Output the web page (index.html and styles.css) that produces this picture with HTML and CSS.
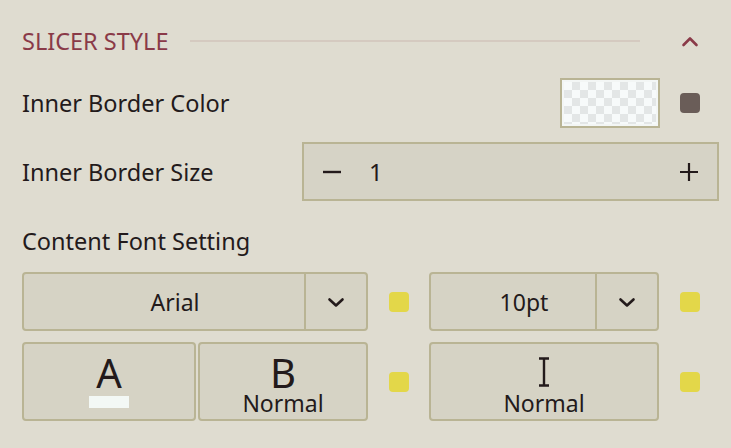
FILE: index.html
```html
<!DOCTYPE html>
<html lang="en">
<head>
  <meta charset="UTF-8">
  <meta name="viewport" content="width=device-width, initial-scale=1.0">
  <title>Slicer Style</title>
  <link rel="stylesheet" href="styles.css">
</head>
<body>
  <div class="panel">
    <div class="section-head">
      <span class="section-title">SLICER STYLE</span>
      <span class="section-rule"></span>
      <button class="collapse-btn" aria-label="Collapse">
        <svg width="18" height="12" viewBox="0 0 18 12"><path d="M2.5 10 L9 3.5 L15.5 10" fill="none" stroke="#8a3a48" stroke-width="2.6" stroke-linecap="round" stroke-linejoin="round"/></svg>
      </button>
    </div>

    <div class="row row-color">
      <span class="label">Inner Border Color</span>
      <div class="swatch"><div class="swatch-fill"></div></div>
      <span class="dot dot-dark"></span>
    </div>

    <div class="row row-size">
      <span class="label">Inner Border Size</span>
      <div class="stepper">
        <button class="step-btn" aria-label="Decrease">
          <svg width="20" height="20" viewBox="0 0 20 20"><path d="M1 10 H19" stroke="#231a1b" stroke-width="2.4"/></svg>
        </button>
        <span class="step-value">1</span>
        <button class="step-btn" aria-label="Increase">
          <svg width="20" height="20" viewBox="0 0 20 20"><path d="M1 10 H19 M10 1 V19" stroke="#231a1b" stroke-width="2.2"/></svg>
        </button>
      </div>
    </div>

    <div class="label label-block">Content Font Setting</div>

    <div class="font-grid">
      <div class="select">
        <span class="select-value">Arial</span>
        <span class="select-arrow">
          <svg width="18" height="11" viewBox="0 0 18 11"><path d="M2.5 2.5 L9 8.5 L15.5 2.5" fill="none" stroke="#231a1b" stroke-width="2.6" stroke-linecap="round" stroke-linejoin="round"/></svg>
        </span>
      </div>
      <span class="dot dot-yellow"></span>
      <div class="select">
        <span class="select-value">10pt</span>
        <span class="select-arrow">
          <svg width="18" height="11" viewBox="0 0 18 11"><path d="M2.5 2.5 L9 8.5 L15.5 2.5" fill="none" stroke="#231a1b" stroke-width="2.6" stroke-linecap="round" stroke-linejoin="round"/></svg>
        </span>
      </div>
      <span class="dot dot-yellow"></span>

      <div class="style-pair">
        <button class="style-btn">
          <span class="style-glyph">A</span>
          <span class="color-bar"></span>
        </button>
        <button class="style-btn">
          <span class="style-glyph">B</span>
          <span class="style-name">Normal</span>
        </button>
      </div>
      <span class="dot dot-yellow"></span>
      <button class="style-btn">
        <span class="style-icon">
          <svg width="14" height="30" viewBox="0 0 14 30"><path d="M2 1.5 H12 M2 28.5 H12 M7 1.5 V28.5" fill="none" stroke="#231a1b" stroke-width="2.4"/></svg>
        </span>
        <span class="style-name">Normal</span>
      </button>
      <span class="dot dot-yellow"></span>
    </div>
  </div>
</body>
</html>
```

FILE: styles.css
```css
body {
  margin: 0;
  background: #dfdcd0;
  font-family: 'Noto Sans', 'Open Sans', sans-serif;
  color: #231a1b;
}

button {
  font-family: inherit;
  color: inherit;
  padding: 0;
  cursor: pointer;
}

.panel {
  width: 697px;
  margin-left: 22px;
  padding-top: 25px;
}

.section-head {
  display: flex;
  align-items: center;
  height: 32px;
  margin-bottom: 21px;
}

.section-title {
  font-size: 23.5px;
  line-height: 32px;
  color: #8a3a48;
}

.section-rule {
  flex: 1;
  height: 2px;
  background: #d5cac0;
  margin: 0 20px 0 22px;
}

.collapse-btn {
  width: 59px;
  height: 32px;
  border: none;
  background: none;
  display: flex;
  align-items: center;
  justify-content: center;
}

.row {
  display: flex;
  align-items: center;
}

.label {
  font-size: 23.5px;
  line-height: 32px;
  flex: 1;
}

.row-color {
  height: 50px;
  margin-bottom: 14px;
}

.swatch {
  width: 100px;
  height: 50px;
  box-sizing: border-box;
  border: 2px solid #b9b494;
  background: #f3f6f5;
  padding: 2px;
}

.swatch-fill {
  height: 100%;
  background: repeating-conic-gradient(#e3e6e6 0 25%, #f7fafa 0 50%) 0 0 / 16px 16px;
}

.dot {
  width: 20px;
  height: 20px;
  border-radius: 4px;
  align-self: center;
}

.row-color .dot {
  margin: 0 19px 0 20px;
}

.dot-dark {
  background: #6a5d58;
}

.dot-yellow {
  background: #e3d749;
}

.row-size {
  height: 59px;
  margin-bottom: 24px;
}

.stepper {
  width: 417px;
  height: 59px;
  box-sizing: border-box;
  border: 2px solid #b9b494;
  background: #d6d3c6;
  display: flex;
  align-items: center;
  padding: 0 18px;
}

.step-btn {
  border: none;
  background: none;
  width: 20px;
  height: 20px;
  display: flex;
}

.step-value {
  font-size: 24px;
  margin-left: 27px;
  flex: 1;
}

.label-block {
  margin-bottom: 15px;
}

.font-grid {
  display: grid;
  grid-template-columns: 346px 20px 230px 20px;
  grid-template-rows: 59px 79px;
  column-gap: 20.5px;
  row-gap: 11px;
}

.select {
  display: flex;
  box-sizing: border-box;
  border: 2px solid #b9b494;
  border-radius: 4px;
  background: #d6d3c5;
}

.select-value {
  flex: 1;
  display: flex;
  align-items: center;
  justify-content: center;
  font-size: 23px;
  padding-left: 22px;
}

.select-arrow {
  width: 60px;
  border-left: 2px solid #b9b494;
  display: flex;
  align-items: center;
  justify-content: center;
  padding-top: 1px;
}

.style-pair {
  display: grid;
  grid-template-columns: 174px 1fr;
  column-gap: 2px;
}

.style-btn {
  box-sizing: border-box;
  border: 2px solid #b9b494;
  border-radius: 4px;
  background: #d6d3c5;
  display: flex;
  flex-direction: column;
  align-items: center;
  padding-top: 11px;
}

.style-glyph {
  font-size: 40px;
  line-height: 36px;
}

.style-icon {
  height: 36px;
  display: flex;
  align-items: center;
  padding-bottom: 2px;
  box-sizing: border-box;
}

.style-name {
  font-size: 23px;
  line-height: 24px;
}

.color-bar {
  width: 40px;
  height: 12px;
  margin-top: 5px;
  background: #f3f8f5;
}
```
